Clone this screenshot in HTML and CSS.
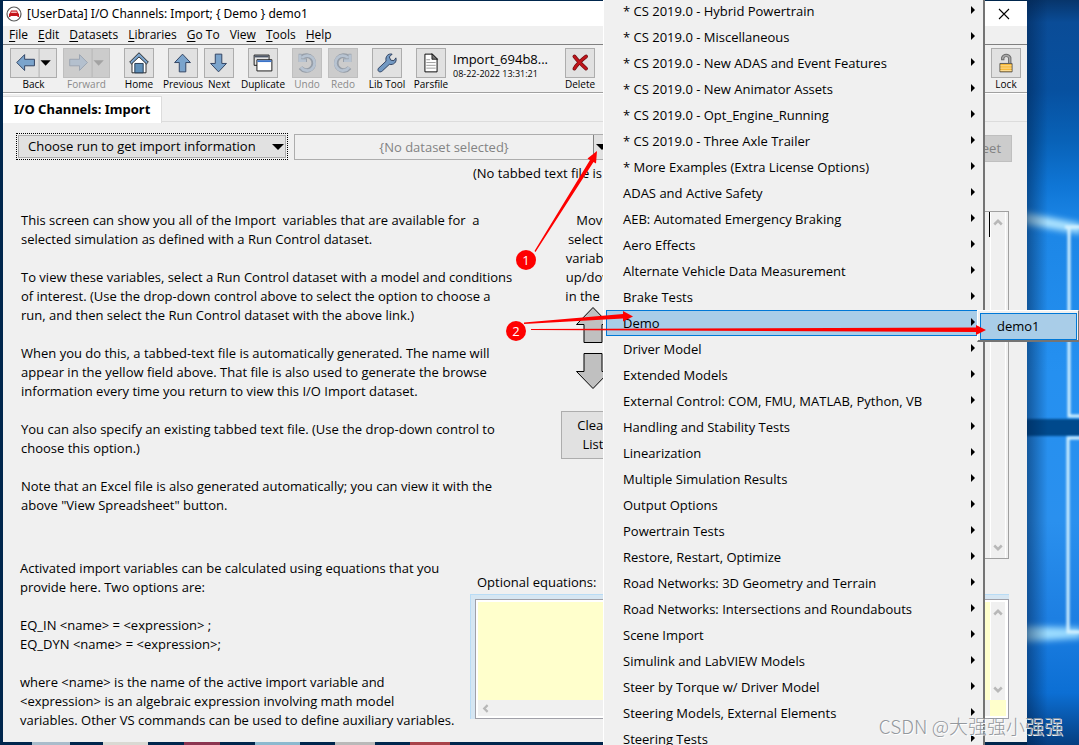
FILE: index.html
```html
<!DOCTYPE html>
<html lang="en">
<head>
<meta charset="utf-8">
<title>I/O Channels: Import</title>
<link rel="stylesheet" href="styles.css">
</head>
<body>
<div class="desktop">
  <svg class="wallpaper" viewBox="0 0 52 745" preserveAspectRatio="none" aria-hidden="true">
    <defs>
      <linearGradient id="sky" x1="0" y1="0" x2="0" y2="1">
        <stop offset="0" stop-color="#07356b"/><stop offset=".03" stop-color="#0a4c97"/>
        <stop offset=".12" stop-color="#07509f"/><stop offset=".19" stop-color="#0862b8"/>
        <stop offset=".25" stop-color="#0f76d6"/><stop offset=".3" stop-color="#1c86e6"/>
        <stop offset=".5" stop-color="#2590f0"/><stop offset=".7" stop-color="#2a90ee"/>
        <stop offset=".83" stop-color="#1d7fe2"/><stop offset=".93" stop-color="#0c6fd4"/>
        <stop offset="1" stop-color="#053e80"/>
      </linearGradient>
      <linearGradient id="side" x1="0" y1="0" x2="1" y2="0">
        <stop offset="0" stop-color="#00204a" stop-opacity=".5"/><stop offset=".4" stop-color="#00204a" stop-opacity="0"/>
      </linearGradient>
      <filter id="soft" x="-50%" y="-50%" width="200%" height="200%"><feGaussianBlur stdDeviation="3"/></filter>
      <filter id="fine" x="-50%" y="-10%" width="200%" height="120%"><feGaussianBlur stdDeviation="1"/></filter>
    </defs>
    <rect width="52" height="745" fill="url(#sky)"/>
    <rect x="-8" y="419" width="70" height="17" fill="#05498c" filter="url(#fine)"/>
    <path d="M-5 212L55 224V234L-5 224Z" fill="#aee4ff" filter="url(#soft)"/>
    <path d="M-5 626L55 628V638L-5 642Z" fill="#9bdcff" filter="url(#soft)"/>
    <path d="M42 226V416M42 439V632" stroke="#7cc6ff" stroke-width="7" filter="url(#soft)"/>
    <path d="M42 228V416H55M55 438H41V632H55M38 227H55" fill="none" stroke="#d3f1ff" stroke-width="3" filter="url(#fine)"/>
    <rect width="52" height="745" fill="url(#side)"/>
  </svg>
  <div class="taskbar" aria-hidden="true"></div>

  <main class="window">
    <header class="titlebar">
      <svg class="app-icon" viewBox="0 0 16 16" aria-hidden="true">
        <circle cx="8" cy="8" r="7" fill="#fff" stroke="#5a5a5a" stroke-width="1.2"/>
        <path d="M5 4.500H11L12 7L13 8V11H11.500V10H4.500V11H3V8L4 7Z" fill="#c4161c"/>
        <path d="M5.500 5.500H10.500L11 7H5Z" fill="#f3b9b9"/>
      </svg>
      <h1 class="title">[UserData] I/O Channels: Import; { Demo } demo1</h1>
      <button class="close" aria-label="Close"><svg viewBox="0 0 12 12" width="12" height="12"><path d="M1 1L11 11M11 1L1 11" stroke="#000" stroke-width="1.1"/></svg></button>
    </header>
    <nav class="menubar">
      <button><u>F</u>ile</button><button><u>E</u>dit</button><button><u>D</u>atasets</button><button><u>L</u>ibraries</button><button><u>G</u>o To</button><button>Vie<u>w</u></button><button><u>T</u>ools</button><button><u>H</u>elp</button>
    </nav>
    <div class="toolbar">
      <div class="group">
        <button class="tool"><span class="face split"><svg viewBox="0 0 47 30"><path d="M5.500 14.500L14 6V11H24.500V18H14V23Z" fill="#7ba4cc" stroke="#2b3d5c"/><path d="M29.500 0V30" stroke="#adadad"/><path d="M31 12H42L36.500 18Z" fill="#000"/></svg></span><span class="caption">Back</span></button>
        <button class="tool" disabled><span class="face split"><svg viewBox="0 0 47 30"><path d="M24.500 14.500L16 6V11H5.500V18H16V23Z" fill="#b4c0ce" stroke="#9aa4b0"/><path d="M29.500 0V30" stroke="#b5b5b5"/><path d="M31 12H42L36.500 18Z" fill="#a3a3a3"/></svg></span><span class="caption">Forward</span></button>
      </div>
      <div class="group">
        <button class="tool"><span class="face"><svg viewBox="0 0 30 30"><path d="M7.500 14V25.500H22.500V14L15 7Z" fill="#fff" stroke="#222"/><path d="M15 4L25 14L23 16L15 8.500L7 16L5 14Z" fill="#7ba4cc" stroke="#222"/><path d="M10.500 15.500H19.500V25.500H10.500Z" fill="#5f8fb8" stroke="#23384f"/></svg></span><span class="caption">Home</span></button>
      </div>
      <div class="group">
        <button class="tool"><span class="face"><svg viewBox="0 0 30 30"><path d="M14.500 5.500L23 14.500H18V24.500H11V14.500H6Z" fill="#7ba4cc" stroke="#2b3d5c"/></svg></span><span class="caption">Previous</span></button>
        <button class="tool"><span class="face"><svg viewBox="0 0 30 30"><path d="M14.500 24.500L23 15.500H18V5.500H11V15.500H6Z" fill="#7ba4cc" stroke="#2b3d5c"/></svg></span><span class="caption">Next</span></button>
      </div>
      <div class="group">
        <button class="tool"><span class="face"><svg viewBox="0 0 30 30"><path d="M5.500 6.500H21.500V17.500H5.500Z" fill="#e6e6e6" stroke="#111"/><path d="M6 7H21V9H6Z" fill="#4c5668"/><path d="M8.500 11.500H24.500V23.500H8.500Z" fill="#fff" stroke="#111"/><path d="M9 12H24V14H9Z" fill="#3b74c9"/></svg></span><span class="caption">Duplicate</span></button>
      </div>
      <div class="group">
        <button class="tool" disabled><span class="face"><svg viewBox="0 0 30 30"><path d="M9 9A8 8 0 1 1 8 20" fill="none" stroke="#969ea8" stroke-width="5"/><path d="M9 5H6V14H15V10H11Z" fill="#969ea8"/><path d="M7.500 6V12.500H14M9.500 9.500A8 8 0 1 1 8.500 19.500" fill="none" stroke="#b7c3d1" stroke-width="3"/></svg></span><span class="caption">Undo</span></button>
        <button class="tool" disabled><span class="face"><svg viewBox="0 0 30 30"><path d="M21 9A8 8 0 1 0 22 20" fill="none" stroke="#969ea8" stroke-width="5"/><path d="M21 5H24V14H15V10H19Z" fill="#969ea8"/><path d="M22.500 6V12.500H16M20.500 9.500A8 8 0 1 0 21.500 19.500" fill="none" stroke="#b7c3d1" stroke-width="3"/></svg></span><span class="caption">Redo</span></button>
      </div>
      <div class="group">
        <button class="tool"><span class="face"><svg viewBox="0 0 30 30"><path d="M20.500 5.500L17.500 8.500L19 12L22.500 12.500L24.500 9.500C26 14 22 17.500 17.500 16.500L10 23.500C8 25.500 4.500 24.500 5.500 21L14 13C13 8 16 4.500 20.500 5.500Z" fill="#7399c2" stroke="#2b3d5c"/></svg></span><span class="caption">Lib Tool</span></button>
      </div>
      <div class="group">
        <button class="tool"><span class="face"><svg viewBox="0 0 30 30"><path d="M8.500 5.500H16.500L21.500 10.500V24.500H8.500Z" fill="#fff" stroke="#000"/><path d="M16 5V11H22Z" fill="#777" stroke="#000" stroke-width=".8"/><path d="M10 11.500H14M10 14.500H20M10 17.500H20M10 20.500H20" stroke="#999"/></svg></span><span class="caption">Parsfile</span></button>
      </div>
      <div class="dataset"><span class="dataset-name">Import_694b8...</span><time>08-22-2022 13:31:21</time></div>
      <div class="group">
        <button class="tool"><span class="face"><svg viewBox="0 0 30 30"><path d="M9 8C12 12 17 17 21.500 21M21.500 8C17 11.500 12 16 9 21" fill="none" stroke="#6d0d10" stroke-width="4" stroke-linecap="round"/><path d="M9 8C12 12 17 17 21.500 21M21.500 8C17 11.500 12 16 9 21" fill="none" stroke="#c0151b" stroke-width="2.500" stroke-linecap="round"/></svg></span><span class="caption">Delete</span></button>
      </div>
      <div class="group end">
        <button class="tool"><span class="face"><svg viewBox="0 0 30 30"><path d="M11.500 12V9.500A4 4 0 0 1 19 9.500V15" fill="none" stroke="#6c6c6c" stroke-width="3.600"/><path d="M11.500 11V9.500A4 4 0 0 1 19 9.500V15" fill="none" stroke="#a9a9a9" stroke-width="1.500"/><path d="M8.500 15.500H21.500V24.500H8.500Z" fill="#f7b733" stroke="#555"/><path d="M9 18H21M9 20.500H21M9 23H21" stroke="#fde0a0"/></svg></span><span class="caption">Lock</span></button>
      </div>
    </div>
    <div class="tabs"><h2 class="tab">I/O Channels: Import</h2></div>

    <section class="panel">
      <div class="run-row">
        <div class="picker">
          <select class="picker-select" aria-label="Run option"><option>Choose run to get import information</option></select>
          <svg class="picker-arrow" viewBox="0 0 12 6" aria-hidden="true"><path d="M0 0H12L6 6Z"/></svg>
        </div>
        <div class="link">
          <button class="link-field" disabled>{No dataset selected}</button>
          <button class="link-arrow" aria-label="Choose dataset"><svg viewBox="0 0 12 6" width="12" height="6"><path d="M0 0H12L6 6Z"/></svg></button>
        </div>
        <button class="sheet" disabled>View Spreadsheet</button>
      </div>
      <p class="status">(No tabbed text file is</p>

      <div class="main">
        <div class="help">
          <p>This screen can show you all of the Import&nbsp; variables that are available for&nbsp; a<br>selected simulation as defined with a Run Control dataset.</p>
          <p>To view these variables, select a Run Control dataset with a model and conditions<br>of interest. (Use the drop-down control above to select the option to choose a<br>run, and then select the Run Control dataset with the above link.)</p>
          <p>When you do this, a tabbed-text file is automatically generated. The name will<br>appear in the yellow field above. That file is also used to generate the browse<br>information every time you return to view this I/O Import dataset.</p>
          <p>You can also specify an existing tabbed text file. (Use the drop-down control to<br>choose this option.)</p>
          <p>Note that an Excel file is also generated automatically; you can view it with the<br>above "View Spreadsheet" button.</p>
        </div>
        <div class="mover">
          <p>Move<br>selected<br>variables<br>up/down<br>in the list</p>
          <button class="arrow" aria-label="Move up"><svg viewBox="0 0 34 36" width="34" height="36"><path d="M17 .5L33.500 17.500H26V35.500H8V17.500H.5Z"/></svg></button>
          <button class="arrow" aria-label="Move down"><svg viewBox="0 0 34 36" width="34" height="36"><path d="M17 35.500L33.500 18.500H26V.5H8V18.500H.5Z"/></svg></button>
          <button class="clear">Clear<br>List</button>
        </div>
        <div class="list">
          <div class="list-caret"></div>
          <div class="scroll">
            <svg viewBox="0 0 8 6"><path d="M1 5L4 2L7 5"/></svg>
            <svg viewBox="0 0 8 6"><path d="M1 1L4 4L7 1"/></svg>
          </div>
        </div>
      </div>

      <div class="equations">
        <div class="help">
          <p>Activated import variables can be calculated using equations that you<br>provide here. Two options are:</p>
          <p>EQ_IN &lt;name&gt; = &lt;expression&gt; ;<br>EQ_DYN &lt;name&gt; = &lt;expression&gt;;</p>
          <p>where &lt;name&gt; is the name of the active import variable and<br>&lt;expression&gt; is an algebraic expression involving math model<br>variables. Other VS commands can be used to define auxiliary variables.</p>
        </div>
        <div class="editor">
          <label for="eq">Optional equations:</label>
          <div class="editor-frame">
            <div class="editor-box">
              <textarea id="eq"></textarea>
              <div class="scroll">
                <svg viewBox="0 0 8 6"><path d="M1 5L4 2L7 5"/></svg>
                <svg viewBox="0 0 8 6"><path d="M1 1L4 4L7 1"/></svg>
              </div>
              <div class="hscroll"><svg viewBox="0 0 8 8"><path d="M5 1L2 4L5 7"/></svg></div>
            </div>
          </div>
        </div>
      </div>
    </section>
  </main>

  <div class="menu" role="menu">
    <button role="menuitem">* CS 2019.0 - Hybrid Powertrain</button>
    <button role="menuitem">* CS 2019.0 - Miscellaneous</button>
    <button role="menuitem">* CS 2019.0 - New ADAS and Event Features</button>
    <button role="menuitem">* CS 2019.0 - New Animator Assets</button>
    <button role="menuitem">* CS 2019.0 - Opt_Engine_Running</button>
    <button role="menuitem">* CS 2019.0 - Three Axle Trailer</button>
    <button role="menuitem">* More Examples (Extra License Options)</button>
    <button role="menuitem">ADAS and Active Safety</button>
    <button role="menuitem">AEB: Automated Emergency Braking</button>
    <button role="menuitem">Aero Effects</button>
    <button role="menuitem">Alternate Vehicle Data Measurement</button>
    <button role="menuitem">Brake Tests</button>
    <button role="menuitem" class="active">Demo</button>
    <button role="menuitem">Driver Model</button>
    <button role="menuitem">Extended Models</button>
    <button role="menuitem">External Control: COM, FMU, MATLAB, Python, VB</button>
    <button role="menuitem">Handling and Stability Tests</button>
    <button role="menuitem">Linearization</button>
    <button role="menuitem">Multiple Simulation Results</button>
    <button role="menuitem">Output Options</button>
    <button role="menuitem">Powertrain Tests</button>
    <button role="menuitem">Restore, Restart, Optimize</button>
    <button role="menuitem">Road Networks: 3D Geometry and Terrain</button>
    <button role="menuitem">Road Networks: Intersections and Roundabouts</button>
    <button role="menuitem">Scene Import</button>
    <button role="menuitem">Simulink and LabVIEW Models</button>
    <button role="menuitem">Steer by Torque w/ Driver Model</button>
    <button role="menuitem">Steering Models, External Elements</button>
    <button role="menuitem">Steering Tests</button>
  </div>
  <div class="submenu" role="menu"><button role="menuitem">demo1</button></div>

  <svg class="notes" viewBox="0 0 1079 745" width="1079" height="745" aria-hidden="true">
    <g fill="#fe0000">
      <path d="M534.500 251L590 160L587.500 158.500L597 151L596 163.500L593.500 162L535.500 252Z"/>
      <path d="M524 322.500L623 314V311L633 316.500L623 321.500V318.500L524 324Z"/>
      <path d="M531 329L976 327.500V325L986 330L976 335V332L531 330Z"/>
      <circle cx="526" cy="260" r="10"/><circle cx="516" cy="331" r="10"/>
    </g>
    <g class="note-number"><text x="526" y="265">1</text><text x="516" y="336">2</text></g>
  </svg>
  <div class="watermark">CSDN @大强强小强强</div>
</div>
</body>
</html>
```
FILE: styles.css
```css
* { box-sizing: border-box; }
body { margin: 0; font: 13px/19px "Open Sans", "Noto Sans", sans-serif; color: #000; }
h1, h2, p { margin: 0; font: inherit; }
button, select, textarea { margin: 0; padding: 0; border: 0; background: none; font: inherit; color: inherit; }
svg { display: block; }

.desktop { position: relative; height: 100vh; min-height: 745px; overflow: hidden; background: #00264d; }
.wallpaper { position: absolute; top: 0; right: 0; width: 52px; height: 100%; }
.taskbar {
  position: absolute; left: 0; right: 476px; bottom: 0; height: 3px;
  background: linear-gradient(90deg, #00264d 32px, #a9bccb 32px 70px, #00264d 70px 103px, #d9d9d3 103px 148px, #00264d 148px 184px, #8c3450 184px 220px, #00264d 220px 255px, #8cb9cf 255px 300px, #00264d 300px 335px, #b9b9b9 335px 375px, #00264d 375px 410px, #a8434a 410px 450px, #00264d 450px);
}

.window {
  position: absolute; top: 1px; right: 52px; bottom: 3px; left: 3px;
  display: flex; flex-direction: column; overflow: hidden; background: #f0f0f0;
}
.titlebar { display: flex; align-items: center; height: 25px; flex: none; padding-left: 3px; background: #fff; }
.app-icon { width: 16px; height: 16px; }
.title { flex: 1; margin-left: 5px; font-family: "Noto Sans", sans-serif; font-size: 12px; }
.close { display: grid; place-items: center; width: 46px; height: 25px; }
.menubar { display: flex; flex: none; gap: 10px; height: 18px; padding-left: 6px; font-size: 12px; line-height: 16px; }
.menubar button { white-space: nowrap; }
.menubar u { text-underline-offset: 2px; }

.toolbar {
  display: flex; flex: none; gap: 14px; height: 49px; padding: 3px 6px 0 7px;
  border-top: 1px solid #808080; border-bottom: 1px solid #a0a0a0;
}
.group { display: flex; gap: 6px; }
.end { margin-left: auto; }
.tool { display: flex; flex-direction: column; align-items: center; width: 30px; height: 44px; }
.tool:has(.split) { width: 47px; }
.face { display: block; width: 30px; height: 30px; border: 1px solid #adadad; background: #e1e1e1; }
.split { width: 47px; }
.face svg { width: 100%; height: 100%; }
.caption { font-size: 10px; line-height: 13px; white-space: nowrap; }
.tool:disabled { color: #8a8a8a; }
.tool:disabled .face { border-color: #bfbfbf; background: #ccc; }
.dataset { display: flex; flex-direction: column; width: 98px; margin-left: -7px; padding-top: 2px; line-height: 18px; white-space: nowrap; }
.dataset time { font-size: 9px; line-height: 11px; }

.tabs { display: flex; flex: none; height: 29px; padding-top: 2px; border-bottom: 1px solid #dcdcdc; border-top: 1px solid #fff; }
.tab { height: 27px; padding: 0 11px; border-right: 1px solid #dcdcdc; border-top: 1px solid #dcdcdc; background: #fff; font-family: "Noto Sans", sans-serif; font-weight: 700; line-height: 25px; }

.panel { flex: 1; padding: 11px 18px 0 13px; }
.run-row { display: flex; align-items: flex-start; margin-right: -3px; }
.picker { display: grid; align-items: center; width: 272px; height: 27px; padding: 1px; border: 1px dotted #000; }
.picker-select { grid-area: 1 / 1; width: 100%; height: 100%; padding: 0 9px; appearance: none; border: 1px solid #adadad; border-radius: 0; background: #e1e1e1; }
.picker-arrow { grid-area: 1 / 1; justify-self: end; width: 12px; height: 6px; margin-right: 2px; pointer-events: none; }
.link { display: flex; width: 318px; height: 26px; margin: 1px auto 0 6px; border: 1px solid #adadad; }
.link-field { flex: 1; color: #838383; }
.link-arrow { display: grid; align-items: center; width: 18px; padding-left: 2px; border-left: 1px solid #808080; background: #e1e1e1; }
.sheet { width: 130px; height: 27px; margin-top: 2px; border: 1px solid #bfbfbf; background: #ccc; color: #838383; }
.status { margin: 2px 0 28px 457px; }

.main { display: grid; grid-template-columns: 540px 64px 1fr; height: 348px; margin-left: 5px; }
.help { white-space: nowrap; }
.help p + p { margin-top: 19px; }
.mover { display: flex; flex-direction: column; align-items: center; gap: 10px; text-align: center; white-space: nowrap; }
.mover p { margin-bottom: -9px; }
.arrow svg { fill: #c0c0c0; stroke: #000; }
.clear { width: 64px; height: 48px; margin-top: 12px; border: 1px solid #adadad; background: #e1e1e1; }
.list { display: flex; justify-content: flex-end; border: 1px solid #a0a0a0; padding-right: 2px; }
.list-caret { width: 1px; height: 25px; background: #000; }
.scroll { display: flex; flex-direction: column; justify-content: space-between; align-items: center; width: 16px; padding: 6px 0; border-left: 1px solid #fff; border-right: 1px solid #fff; background: #f0f0f0; }
.scroll svg { width: 10px; height: 8px; }
.scroll path, .hscroll path { fill: none; stroke: #b8b8b8; stroke-width: 2; }

.equations { display: grid; grid-template-columns: 450px 1fr; margin-left: 4px; }
.editor { display: flex; flex-direction: column; padding-top: 14px; }
.editor label { padding-left: 7px; }
.editor-frame { height: 125px; margin-top: 2px; padding: 4px 0 0 4px; border: 1px solid #b9dcf5; border-width: 1px 0 0 1px; background: #d6e6f2; }
.editor-box { display: grid; grid-template: 1fr 16px / 1fr 16px; height: 120px; padding: 2px; border: 1px solid #a0a0a8; background: #ffc; box-shadow: inset 0 0 0 2px #fff; }
.editor textarea { resize: none; width: 100%; height: 100%; background: #ffc; }
.hscroll { display: flex; align-items: center; padding-left: 4px; background: #f0f0f0; }
.hscroll svg { width: 9px; height: 9px; }

.menu {
  position: absolute; top: 0; bottom: 0; left: 603px; width: 382px; overflow: hidden;
  display: flex; flex-direction: column; padding: 0 6px 0 2px; background: #f0f0f0;
  border-left: 1px solid #fff; border-right: 2px solid #747474;
}
.menu button, .submenu button { flex: none; text-align: left; white-space: nowrap; }
.menu button { display: flex; align-items: center; justify-content: space-between; height: 26px; padding-left: 16px; border: 1px solid transparent; border-right: 0; }
.menu button:first-child { margin-top: -2px; }
.menu button::after { content: ""; border: 4px solid transparent; border-left-color: #000; border-right: 0; margin: 0 2px 2px 0; }
.menu .active, .submenu button { border-color: #0078d7; background: #a9cde8; }
.submenu { position: absolute; top: 310px; left: 977px; width: 102px; height: 32px; padding: 2px 1px 2px 2px; border: 1px solid #fff; border-right-color: #747474; border-bottom: 2px solid #747474; background: #f0f0f0; }
.submenu button { width: 100%; height: 27px; padding-left: 16px; border: 1px solid #0078d7; }

.notes { position: absolute; top: 0; left: 0; pointer-events: none; }
.note-number { fill: #fff; font: 13px "Open Sans", sans-serif; text-anchor: middle; }
.watermark { position: absolute; right: 16px; bottom: 5px; color: #94989d; font: 300 19px/28px "Noto Sans CJK SC", sans-serif; text-shadow: 1px 1px 0 #fff; }
```
